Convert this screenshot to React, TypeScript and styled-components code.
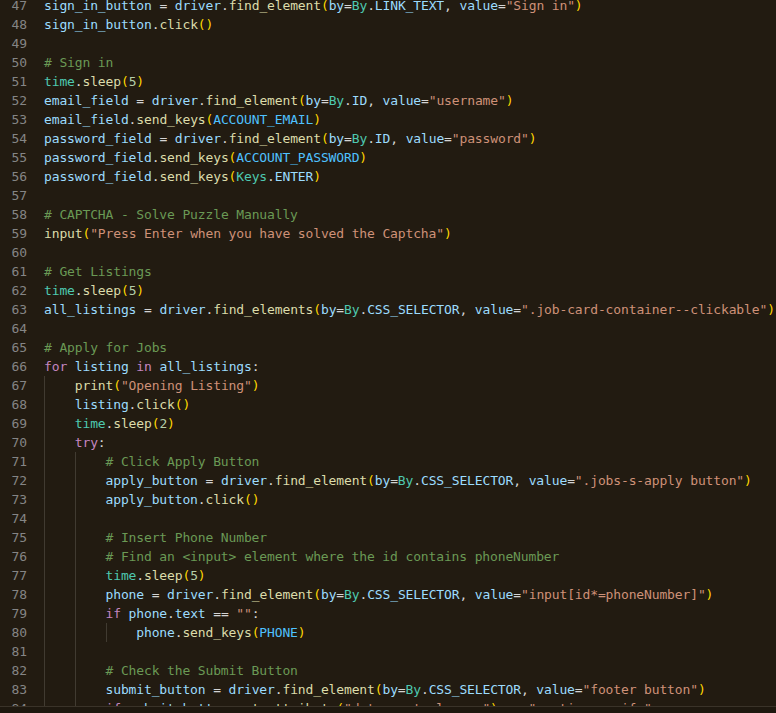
import React from 'react';
import styled, { createGlobalStyle } from 'styled-components';

const CW = 7.69;
const LH = 19;

const GlobalStyle = createGlobalStyle`
  html, body { margin: 0; padding: 0; background: #221b11; overflow: hidden; }
  #root { width: 776px; height: 713px; }
`;

type Kind = 'kw' | 'fn' | 'cls' | 'var' | 'const' | 'attr' | 'str' | 'num' | 'com' | 'br' | 'op' | 'ws';

const colors: Record<Kind, string> = {
  kw: '#c586c0',
  fn: '#dcdcaa',
  cls: '#4ec9b0',
  var: '#9cdcfe',
  const: '#4fc1ff',
  attr: '#9cdcfe',
  str: '#ce9178',
  num: '#b5cea8',
  com: '#6a9955',
  br: '#ffd700',
  op: '#d4d4d4',
  ws: '#d4d4d4',
};

const Editor = styled.div`
  width: 776px;
  height: 713px;
  display: flex;
  flex-direction: column;
  background: #221b11;
  font-family: 'DejaVu Sans Mono', 'Liberation Mono', monospace;
  font-size: 13px;
  letter-spacing: -0.136px;
`;

const Viewport = styled.div`
  flex: 1;
  overflow: hidden;
`;

const Lines = styled.div`
  margin-top: -4px;
  display: flex;
  flex-direction: column;
`;

const Row = styled.div`
  display: flex;
  height: ${LH}px;
  line-height: ${LH}px;
  white-space: pre;
`;

const LineNo = styled.span`
  width: 27px;
  flex: none;
  text-align: right;
  color: #858585;
`;

const Code = styled.span`
  margin-left: 17px;
  display: flex;
`;

const Guide = styled.span`
  display: inline-block;
  flex: none;
  width: ${CW * 4}px;
  height: ${LH}px;
  box-shadow: inset 1px 0 0 #413b31;
`;

const Tok = styled.span<{ $kind: Kind }>`
  color: ${(p) => colors[p.$kind]};
`;

const HScroll = styled.div`
  height: 6px;
  flex: none;
  border-top: 1px solid #3a3329;
  background: #1e180f;
`;

type L = [number, string, number?];

const src: L[] = [
  [0, 'sign_in_button = driver.find_element(by=By.LINK_TEXT, value="Sign in")'],
  [0, 'sign_in_button.click()'],
  [0, ''],
  [0, '# Sign in'],
  [0, 'time.sleep(5)'],
  [0, 'email_field = driver.find_element(by=By.ID, value="username")'],
  [0, 'email_field.send_keys(ACCOUNT_EMAIL)'],
  [0, 'password_field = driver.find_element(by=By.ID, value="password")'],
  [0, 'password_field.send_keys(ACCOUNT_PASSWORD)'],
  [0, 'password_field.send_keys(Keys.ENTER)'],
  [0, ''],
  [0, '# CAPTCHA - Solve Puzzle Manually'],
  [0, 'input("Press Enter when you have solved the Captcha")'],
  [0, ''],
  [0, '# Get Listings'],
  [0, 'time.sleep(5)'],
  [0, 'all_listings = driver.find_elements(by=By.CSS_SELECTOR, value=".job-card-container--clickable")'],
  [0, ''],
  [0, '# Apply for Jobs'],
  [0, 'for listing in all_listings:'],
  [1, 'print("Opening Listing")'],
  [1, 'listing.click()'],
  [1, 'time.sleep(2)'],
  [1, 'try:'],
  [2, '# Click Apply Button'],
  [2, 'apply_button = driver.find_element(by=By.CSS_SELECTOR, value=".jobs-s-apply button")'],
  [2, 'apply_button.click()'],
  [2, '', 2],
  [2, '# Insert Phone Number'],
  [2, '# Find an <input> element where the id contains phoneNumber'],
  [2, 'time.sleep(5)'],
  [2, 'phone = driver.find_element(by=By.CSS_SELECTOR, value="input[id*=phoneNumber]")'],
  [2, 'if phone.text == "":'],
  [3, 'phone.send_keys(PHONE)'],
  [2, '', 2],
  [2, '# Check the Submit Button'],
  [2, 'submit_button = driver.find_element(by=By.CSS_SELECTOR, value="footer button")'],
  [2, 'if submit_button.get_attribute("data-control-name") == "continue_unify":'],
];

const KEYWORDS = new Set(['for', 'in', 'try', 'if']);
const CLASSES = new Set(['By', 'Keys', 'time']);

function tokenize(code: string): [Kind, string][] {
  const out: [Kind, string][] = [];
  if (code.startsWith('#')) return [['com', code]];
  const re = /("[^"]*")|(\d+)|([A-Za-z_]\w*)|(\s+)|([()[\]])|(==|.)/g;
  let m: RegExpExecArray | null;
  while ((m = re.exec(code))) {
    const t = m[0];
    if (m[1]) out.push(['str', t]);
    else if (m[2]) out.push(['num', t]);
    else if (m[3]) {
      const rest = code.slice(re.lastIndex);
      const prev = code[m.index - 1];
      let k: Kind = 'var';
      if (KEYWORDS.has(t)) k = 'kw';
      else if (rest.startsWith('(')) k = 'fn';
      else if (CLASSES.has(t)) k = 'cls';
      else if (/^[A-Z_]+$/.test(t) && t.length > 1) k = prev === '.' ? 'attr' : 'const';
      out.push([k, t]);
    } else if (m[4]) out.push(['ws', t]);
    else if (m[5]) out.push(['br', t]);
    else out.push(['op', t]);
  }
  return out;
}

export default function App() {
  return (
    <>
      <GlobalStyle />
      <Editor>
        <Viewport>
          <Lines>
            {src.map(([indent, code, guides], i) => {
              const g = guides ?? indent;
              return (
                <Row key={i}>
                  <LineNo>{47 + i}</LineNo>
                  <Code>
                    {Array.from({ length: g }).map((_, j) => (
                      <Guide key={j} />
                    ))}
                    <span>
                      {tokenize(code).map(([k, t], j) => (
                        <Tok key={j} $kind={k}>
                          {t}
                        </Tok>
                      ))}
                    </span>
                  </Code>
                </Row>
              );
            })}
          </Lines>
        </Viewport>
        <HScroll />
      </Editor>
    </>
  );
}
